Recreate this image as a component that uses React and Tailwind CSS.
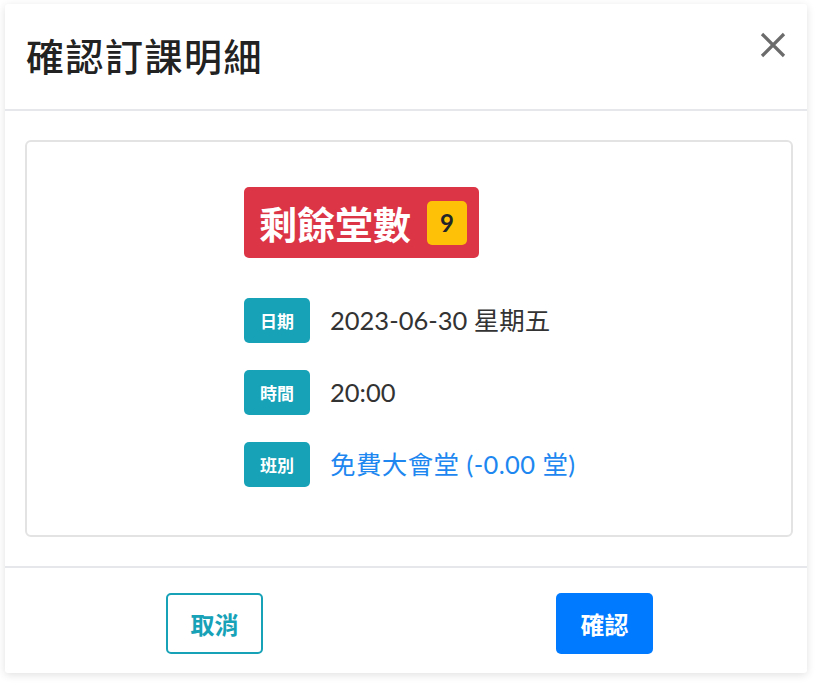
export default function App() {
  const font = { fontFamily: 'Lato, "Noto Sans CJK TC", sans-serif' };
  return (
    <div className="w-[816px] h-[687px] bg-white pt-[4px] pl-[5px]" style={font}>
      <div className="w-[802px] h-[669px] bg-white rounded-[3px] shadow-[0_2px_8px_rgba(0,0,0,0.12)] flex flex-col">
        <div className="h-[107px] flex items-center justify-between pl-[21px] pr-[20px] border-b-2 border-[#e5e7eb] shrink-0">
          <h1 className="text-[38px] leading-none text-[#222] font-medium tracking-[1.5px] -mt-[4px]" style={{ fontFamily: '"Noto Sans CJK TC", sans-serif' }}>確認訂課明細</h1>
          <svg width="28" height="28" viewBox="0 0 28 28" className="-mt-[24px]">
            <path d="M3 3 L25 25 M25 3 L3 25" stroke="#6b6b6b" strokeWidth="3.2" strokeLinecap="butt" />
          </svg>
        </div>
        <div className="flex-1 pl-[20px] pr-[14px] pt-[29px] pb-[28px]">
          <div className="h-[397px] border-2 border-[#e3e3e3] rounded-[6px] flex justify-center pt-[45px]">
            <div className="w-[330px] flex flex-col whitespace-nowrap">
              <div className="w-[235px] h-[71px] bg-[#dc3545] rounded-[5px] flex items-center pl-[15px] gap-[16px]">
                <span className="text-white text-[38px] font-bold leading-none" style={{ fontFamily: '"Noto Sans CJK TC", sans-serif' }}>剩餘堂數</span>
                <span className="w-[40px] h-[44px] bg-[#ffc107] rounded-[5px] flex items-center justify-center text-[#212529] text-[24px] font-bold leading-none">9</span>
              </div>
              <div className="mt-[40px] flex flex-col gap-[27px]">
                {[
                  ['日期', '2023-06-30 星期五', 'text-[#333]'],
                  ['時間', '20:00', 'text-[#333]'],
                  ['班別', '免費大會堂 (-0.00 堂)', 'text-[#1e87f0] tracking-[0.4px]'],
                ].map(([l, v, c]) => (
                  <div key={l} className="flex items-center h-[45px]">
                    <span className="shrink-0 w-[66px] h-[45px] bg-[#17a2b8] rounded-[5px] text-white text-[17px] font-bold flex items-center justify-center leading-none" style={{ fontFamily: '"Noto Sans CJK TC", sans-serif' }}>{l}</span>
                    <span className={`ml-[20px] whitespace-nowrap text-[25.5px] leading-none ${c}`}>{v}</span>
                  </div>
                ))}
              </div>
            </div>
          </div>
        </div>
        <div className="h-[107px] border-t-2 border-[#e5e7eb] grid grid-cols-2 items-center shrink-0 pl-[12px] pt-[6px]">
          <div className="flex justify-center">
            <button className="w-[97px] h-[61px] border-2 border-[#17a2b8] rounded-[5px] text-[#17a2b8] text-[24px] font-bold bg-white" style={{ fontFamily: '"Noto Sans CJK TC", sans-serif' }}>取消</button>
          </div>
          <div className="flex justify-center pr-[10px]">
            <button className="w-[97px] h-[61px] bg-[#007bff] rounded-[5px] text-white text-[24px] font-bold" style={{ fontFamily: '"Noto Sans CJK TC", sans-serif' }}>確認</button>
          </div>
        </div>
      </div>
    </div>
  );
}
